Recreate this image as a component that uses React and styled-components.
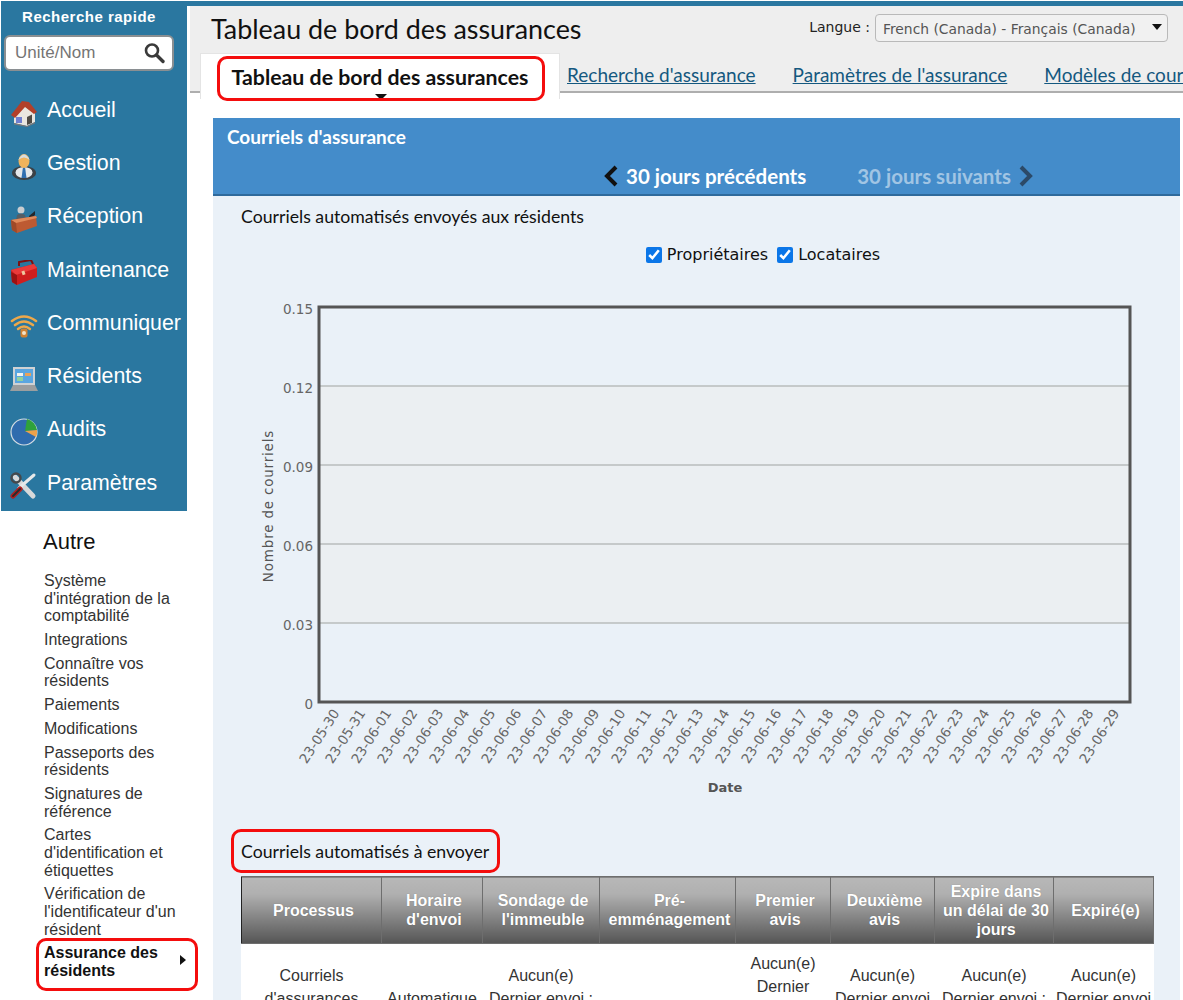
import styled, { createGlobalStyle } from "styled-components";

const GlobalStyle = createGlobalStyle`
  html, body { margin: 0; padding: 0; background: #fff; }
  #root { height: 1000px; overflow: hidden; }
`;

// --- sidebar icons, drawn by hand
const HouseIcon = () => (
  <svg width="28" height="28" viewBox="0 0 28 28">
    <path d="M4 15 L4 24 L17 27 L25 23 L25 14 L14 6 Z" fill="#e9e6e0" />
    <path d="M4 24 L17 27 L25 23 L25 24.5 L17 28 L4 25.5 Z" fill="#77777a" />
    <path d="M1 16 L12 2 L19 3 L27 13 L24 15 L15 8 L5 19 Z" fill="#b2402a" />
    <path d="M17 26 L17 18 L22 15.5 L22 24 Z" fill="#4e4a44" />
    <rect x="6" y="18" width="6" height="6" fill="#6f7fd0" />
  </svg>
);
const PersonIcon = () => (
  <svg width="26" height="28" viewBox="0 0 26 28">
    <ellipse cx="13" cy="21" rx="12" ry="7" fill="#3b4146" />
    <ellipse cx="13" cy="20.5" rx="8.5" ry="5.5" fill="#e4e7e9" />
    <path d="M12 15 L14 15 L15.5 26 L10.5 26 Z" fill="#2f6fb0" />
    <ellipse cx="13" cy="9" rx="5.5" ry="7" fill="#efb35c" />
    <path d="M7.2 8 Q13 -3 18.8 8 Q13 3 7.2 8" fill="#d8dcdc" />
  </svg>
);
const DeskIcon = () => (
  <svg width="28" height="28" viewBox="0 0 28 28">
    <circle cx="11" cy="5" r="3.5" fill="#c9cdd0" />
    <path d="M6 15 L7 10 Q11 7 15 10 L16 14 Z" fill="#555e66" />
    <path d="M19 11 L25 6 L25 10 L20 14 Z" fill="#23262a" />
    <path d="M1 15 L26 11 L27 21 L7 28 L2 25 Z" fill="#bd5a32" />
    <path d="M1 15 L26 11 L27 13 L6 18 Z" fill="#e08a5a" />
    <path d="M6 18 L7 28 L2 25 L1 15 Z" fill="#a04a28" />
  </svg>
);
const ToolboxIcon = () => (
  <svg width="28" height="26" viewBox="0 0 28 26">
    <path d="M9 6 L9 2 L21 0 L23 4" fill="none" stroke="#7c1010" strokeWidth="2" />
    <path d="M1 10 L24 4 L27 8 L27 17 L7 25 L2 22 Z" fill="#cf1e1e" />
    <path d="M1 10 L24 4 L27 8 L6 15 Z" fill="#ea3a3a" />
    <path d="M7 15 L7 25 L2 22 L1 12 Z" fill="#9c1212" />
    <rect x="12" y="11" width="3" height="4" fill="#eec9a0" transform="rotate(-18 13 13)" />
  </svg>
);
const WifiIcon = () => (
  <svg width="28" height="26" viewBox="0 0 28 26" fill="none" stroke="#eda84a" strokeLinecap="round">
    <path d="M2 8 Q14 -1 26 8" strokeWidth="2.6" />
    <path d="M5 12 Q14 5 23 12" strokeWidth="2.6" />
    <path d="M8 16 Q14 11 20 16" strokeWidth="2.4" />
    <rect x="10.5" y="15.5" width="7" height="9" rx="2" fill="#d08232" stroke="none" />
    <circle cx="14" cy="20" r="2" fill="#f3e3c8" stroke="none" />
  </svg>
);
const LaptopIcon = () => (
  <svg width="28" height="26" viewBox="0 0 28 26">
    <rect x="3" y="1" width="22" height="18" fill="#cfd2d4" />
    <rect x="5" y="3" width="18" height="14" fill="#5aa6e0" />
    <rect x="7" y="7" width="6" height="3" fill="#f3f3ee" />
    <rect x="15" y="7" width="6" height="3" fill="#e8a25a" />
    <rect x="7" y="11" width="6" height="4" fill="#8fd0a0" />
    <path d="M3 19 L25 19 L28 25 L0 25 Z" fill="#9b9e9f" />
  </svg>
);
const PieIcon = () => (
  <svg width="28" height="28" viewBox="0 0 28 28">
    <circle cx="14" cy="14" r="13" fill="#2f6cae" stroke="#d4dde3" strokeWidth="1.2" />
    <path d="M15 13 L17 1 A13 13 0 0 1 27 12 Z" fill="#2fa23b" />
    <path d="M15 13 L27 12 A13 13 0 0 1 26 19 Z" fill="#eda24a" />
  </svg>
);
const ToolsIcon = () => (
  <svg width="28" height="28" viewBox="0 0 28 28" strokeLinecap="round">
    <path d="M5 5 L23 24" stroke="#d7d9da" strokeWidth="5" />
    <path d="M24 3 L9 16" stroke="#e6e8e9" strokeWidth="3" />
    <path d="M10 17 L3 24" stroke="#b01f1f" strokeWidth="5" />
    <path d="M10 17 L3 24" stroke="#2b2b2b" strokeWidth="2" />
    <circle cx="6" cy="6" r="4.5" fill="none" stroke="#45494c" strokeWidth="2.4" />
  </svg>
);

const navItems = [
  { label: "Accueil", Icon: HouseIcon },
  { label: "Gestion", Icon: PersonIcon },
  { label: "Réception", Icon: DeskIcon },
  { label: "Maintenance", Icon: ToolboxIcon },
  { label: "Communiquer", Icon: WifiIcon },
  { label: "Résidents", Icon: LaptopIcon },
  { label: "Audits", Icon: PieIcon },
  { label: "Paramètres", Icon: ToolsIcon },
];

const otherLinks = [
  "Système d'intégration de la comptabilité",
  "Integrations",
  "Connaître vos résidents",
  "Paiements",
  "Modifications",
  "Passeports des résidents",
  "Signatures de référence",
  "Cartes d'identification et étiquettes",
  "Vérification de l'identificateur d'un résident",
];

const dates = [
  "23-05-30", "23-05-31", "23-06-01", "23-06-02", "23-06-03", "23-06-04", "23-06-05", "23-06-06",
  "23-06-07", "23-06-08", "23-06-09", "23-06-10", "23-06-11", "23-06-12", "23-06-13", "23-06-14",
  "23-06-15", "23-06-16", "23-06-17", "23-06-18", "23-06-19", "23-06-20", "23-06-21", "23-06-22",
  "23-06-23", "23-06-24", "23-06-25", "23-06-26", "23-06-27", "23-06-28", "23-06-29",
];

const yTicks = [
  { label: "0.15", y: 13 },
  { label: "0.12", y: 92 },
  { label: "0.09", y: 171 },
  { label: "0.06", y: 250 },
  { label: "0.03", y: 329 },
  { label: "0", y: 408 },
];

const Chart = () => (
  <ChartSvg viewBox="0 0 939 510" width="939" height="510">
    <rect x="106" y="92" width="811" height="237" fill="#ebeff2" />
    {yTicks.slice(1, 5).map((t) => (
      <line key={t.y} x1="106" x2="917" y1={t.y} y2={t.y} stroke="#b9bcbd" strokeWidth="1.5" />
    ))}
    <rect x="106" y="13" width="811" height="395" fill="none" stroke="#555" strokeWidth="3" />
    {yTicks.map((t) => (
      <AxisText key={t.label} x="100" y={t.y + 6.5} textAnchor="end">{t.label}</AxisText>
    ))}
    {dates.map((d, i) => (
      <AxisText
        key={d}
        x="0"
        y="0"
        textAnchor="end"
        transform={`translate(${127 + i * 26} 419) rotate(-57)`}
      >
        {d}
      </AxisText>
    ))}
    <AxisName x="0" y="0" textAnchor="middle" transform="translate(60 212) rotate(-90)">Nombre de courriels</AxisName>
    <AxisTitle x="512" y="498" textAnchor="middle">Date</AxisTitle>
  </ChartSvg>
);

const lastSent = "Dernier envoi : Jamais";

const tableHead = [
  { label: "Processus", width: 140 },
  { label: "Horaire d'envoi", width: 101 },
  { label: "Sondage de l'immeuble", width: 117 },
  { label: "Pré-emménagement", width: 136 },
  { label: "Premier avis", width: 95 },
  { label: "Deuxième avis", width: 104 },
  { label: "Expire dans un délai de 30 jours", width: 119 },
  { label: "Expiré(e)", width: 100 },
];

export default function App() {
  return (
    <>
      <GlobalStyle />
      <Page>
        <Side>
          <NavPanel>
            <SearchTitle>Recherche rapide</SearchTitle>
            <SearchBox>
              <SearchInput placeholder="Unité/Nom" />
              <svg width="24" height="24" viewBox="0 0 24 24" fill="none" stroke="#3a3a3a">
                <circle cx="10" cy="9.5" r="6" strokeWidth="2.6" />
                <path d="M14.5 14 L21 20.5" strokeWidth="3.4" strokeLinecap="round" />
              </svg>
            </SearchBox>
            <NavList>
              {navItems.map(({ label, Icon }) => (
                <NavItem key={label}>
                  <NavIcon><Icon /></NavIcon>
                  <NavLabel>{label}</NavLabel>
                </NavItem>
              ))}
            </NavList>
          </NavPanel>
          <OtherPanel>
            <OtherTitle>Autre</OtherTitle>
            {otherLinks.map((l) => (
              <OtherLink key={l}>{l}</OtherLink>
            ))}
            <OtherLink $active>
              Assurance des résidents
              <SideCaret />
              <RedBox $top={-6} $left={-8} $right={-20} $bottom={-11} />
            </OtherLink>
          </OtherPanel>
        </Side>

        <Main>
          <TopStripe />
          <Header>
            <TitleRow>
              <PageTitle>Tableau de bord des assurances</PageTitle>
              <LangGroup>
                <LangLabel>Langue :</LangLabel>
                <LangSelect>
                  French (Canada) - Français (Canada)
                  <SelectCaret />
                </LangSelect>
              </LangGroup>
            </TitleRow>
            <Tabs>
              <ActiveTab>
                Tableau de bord des assurances
                <TabCaret />
                <RedBox $top={2} $left={16} $right={14} $bottom={-2} />
              </ActiveTab>
              <TabLink>Recherche d'assurance</TabLink>
              <TabLink>Paramètres de l'assurance</TabLink>
              <TabLink>Modèles de courriel</TabLink>
            </Tabs>
          </Header>

          <Content>
            <Panel>
              <PanelHead>
                <PanelTitle>Courriels d'assurance</PanelTitle>
                <Pager>
                  <PagerLink>
                    <Chevron viewBox="0 0 16 24" width="16" height="24">
                      <path d="M13 3 L4 12 L13 21" stroke="#111" />
                    </Chevron>
                    30 jours précédents
                  </PagerLink>
                  <PagerLink $off>
                    30 jours suivants
                    <Chevron viewBox="0 0 16 24" width="16" height="24">
                      <path d="M3 3 L12 12 L3 21" stroke="#2c4a68" />
                    </Chevron>
                  </PagerLink>
                </Pager>
              </PanelHead>
              <PanelBody>
                <SectionTitle>Courriels automatisés envoyés aux résidents</SectionTitle>
                <Checks>
                  <CheckLabel><input type="checkbox" defaultChecked />Propriétaires</CheckLabel>
                  <CheckLabel><input type="checkbox" defaultChecked />Locataires</CheckLabel>
                </Checks>
                <Chart />
                <SectionTitle2>
                  Courriels automatisés à envoyer
                  <RedBox $top={-13} $left={-10} $right={-11} $bottom={-11} />
                </SectionTitle2>
                <Table>
                  <colgroup>
                    {tableHead.map((h) => (
                      <col key={h.label} style={{ width: h.width }} />
                    ))}
                  </colgroup>
                  <thead>
                    <tr>
                      {tableHead.map((h) => (
                        <Th key={h.label}>{h.label}</Th>
                      ))}
                    </tr>
                  </thead>
                  <tbody>
                    <tr>
                      <Td>Courriels d'assurances résidents</Td>
                      <Td>Automatique</Td>
                      <Td>Aucun(e)<br />{lastSent}</Td>
                      <Td />
                      <Td>Aucun(e)<br />{lastSent}</Td>
                      <Td>Aucun(e)<br />{lastSent}</Td>
                      <Td>Aucun(e)<br />{lastSent}</Td>
                      <Td>Aucun(e)<br />{lastSent}</Td>
                    </tr>
                  </tbody>
                </Table>
              </PanelBody>
            </Panel>
          </Content>
        </Main>
      </Page>
    </>
  );
}

const Page = styled.div`
  display: flex;
  width: 1183px;
  height: 1000px;
  overflow: hidden;
  font-family: "Liberation Sans", Arial, sans-serif;
`;

const Side = styled.aside`
  position: relative;
  z-index: 1;
  flex: 0 0 187px;
  box-sizing: border-box;
  padding: 1px 0 0 1px;
`;

const NavPanel = styled.div`
  height: 510px;
  box-sizing: border-box;
  background: #2a77a0;
  padding-top: 7px;
`;

const SearchTitle = styled.div`
  color: #fff;
  font-size: 15px;
  font-weight: bold;
  letter-spacing: 0.5px;
  text-align: center;
  line-height: 18px;
  margin-right: 10px;
  white-space: nowrap;
`;

const SearchBox = styled.div`
  display: flex;
  align-items: center;
  justify-content: space-between;
  box-sizing: border-box;
  width: 170px;
  height: 36px;
  margin: 9px 0 0 3px;
  padding: 0 6px 0 9px;
  background: #fff;
  border: 2px solid #8a8f92;
  border-radius: 6px;
`;

const SearchInput = styled.input`
  width: 110px;
  border: 0;
  outline: 0;
  padding: 0;
  background: transparent;
  font: 17px "Liberation Sans", Arial, sans-serif;
  &::placeholder { color: #757575; opacity: 1; }
`;

const NavList = styled.div`
  margin-top: 12px;
`;

const NavItem = styled.div`
  display: flex;
  align-items: center;
  height: 53.3px;
  padding-left: 9px;
`;

const NavIcon = styled.span`
  display: flex;
  justify-content: center;
  width: 28px;
  margin-top: 6px;
  margin-right: 9px;
`;

const NavLabel = styled.span`
  color: #fff;
  font-size: 21.33px;
  white-space: nowrap;
  margin-top: 1px;
`;

const OtherPanel = styled.div`
  padding: 18px 0 0 43px;
  width: 134px;
`;

const OtherTitle = styled.div`
  font-size: 22px;
  line-height: 26px;
  color: #111;
  margin: 0 0 17px -1px;
`;

const OtherLink = styled.div`
  position: relative;
  font-size: 16px;
  line-height: 17.6px;
  color: #333;
  margin-bottom: 6.2px;
  font-weight: ${(p) => (p.$active ? "bold" : "normal")};
  ${(p) => p.$active && "color: #111;"}
`;

const SideCaret = styled.span`
  position: absolute;
  right: -8px;
  top: 11px;
  border-left: 6px solid #111;
  border-top: 5px solid transparent;
  border-bottom: 5px solid transparent;
`;

const RedBox = styled.span`
  position: absolute;
  top: ${(p) => p.$top}px;
  left: ${(p) => p.$left}px;
  right: ${(p) => p.$right}px;
  bottom: ${(p) => p.$bottom}px;
  border: 3px solid #f40d0d;
  border-radius: 10px;
  pointer-events: none;
`;

const Main = styled.main`
  flex: 1;
  min-width: 0;
  overflow: hidden;
`;

const TopStripe = styled.div`
  height: 5px;
  margin-top: 1px;
  background: #2a77a0;
`;

const Header = styled.header`
  height: 85px;
  margin-left: 3px;
  background: #eeeeee;
  border-bottom: 2px solid #aeaeae;
  display: flex;
  flex-direction: column;
`;

const TitleRow = styled.div`
  display: flex;
  justify-content: space-between;
  padding: 5px 15px 0 21px;
  height: 41px;
  box-sizing: border-box;
`;

const PageTitle = styled.h1`
  margin: 0;
  font: 400 26.9px "Lato", sans-serif;
  line-height: 36px;
  color: #111;
  white-space: nowrap;
`;

const LangGroup = styled.div`
  display: flex;
  align-items: flex-start;
  gap: 5px;
  margin-top: 3px;
`;

const LangLabel = styled.span`
  font: 14px "DejaVu Sans", sans-serif;
  line-height: 18px;
  margin-top: 4px;
  color: #222;
`;

const LangSelect = styled.div`
  position: relative;
  box-sizing: border-box;
  width: 293px;
  height: 28px;
  padding: 6px 0 0 7px;
  font: 13.85px "DejaVu Sans", sans-serif;
  color: #555;
  background: #f1f1f1;
  border: 1px solid #b9b9b9;
  border-radius: 4px;
  white-space: nowrap;
`;

const SelectCaret = styled.span`
  position: absolute;
  right: 5px;
  top: 9px;
  border-top: 6px solid #111;
  border-left: 5px solid transparent;
  border-right: 5px solid transparent;
`;

const Tabs = styled.nav`
  display: flex;
  align-items: flex-start;
  gap: 37px;
  padding-left: 10px;
  white-space: nowrap;
  margin-top: 6px;
`;

const ActiveTab = styled.div`
  position: relative;
  flex: 0 0 360px;
  box-sizing: border-box;
  height: 46px;
  margin-right: -30px;
  padding-top: 10px;
  text-align: center;
  font: 700 21.3px "Lato", sans-serif;
  color: #111;
  background: #fff;
  border: 1px solid #e4e4e4;
  border-bottom: 0;
`;

const TabCaret = styled.span`
  position: absolute;
  left: 174px;
  top: 40px;
  border-top: 6px solid #111;
  border-left: 6px solid transparent;
  border-right: 6px solid transparent;
`;

const TabLink = styled.a`
  flex: 0 0 auto;
  font: 19px "Lato", sans-serif;
  color: #14587f;
  text-decoration: underline;
  margin-top: 10px;
`;

const Content = styled.div`
  padding: 25px 0 0 26px;
`;

const Panel = styled.section`
  width: 967px;
  background: #eaf1f8;
`;

const PanelHead = styled.div`
  box-sizing: border-box;
  height: 78px;
  padding: 8px 14px 0;
  background: #448cca;
  border-bottom: 2px solid #2f6a9c;
`;

const PanelTitle = styled.div`
  font: 700 19px "Lato", sans-serif;
  line-height: 22px;
  color: #fff;
`;

const Pager = styled.div`
  display: flex;
  justify-content: center;
  gap: 51px;
  margin-top: 15px;
  padding-left: 244px;
`;

const PagerLink = styled.div`
  display: flex;
  align-items: center;
  gap: 7px;
  font: 700 20.5px "Lato", sans-serif;
  line-height: 26px;
  color: ${(p) => (p.$off ? "rgba(255,255,255,0.5)" : "#fff")};
`;

const Chevron = styled.svg`
  fill: none;
  stroke-width: 4;
`;

const PanelBody = styled.div`
  padding: 11px 0 0 28px;
`;

const SectionTitle = styled.div`
  font: 400 17.7px "Lato", sans-serif;
  line-height: 20px;
  color: #111;
`;

const SectionTitle2 = styled(SectionTitle)`
  position: relative;
  display: inline-block;
  margin-top: 38px;
`;

const Checks = styled.div`
  display: flex;
  justify-content: center;
  gap: 9px;
  margin: 18px 0 0 0;
  padding-left: 82px;
  width: 880px;
`;

const CheckLabel = styled.label`
  display: flex;
  align-items: center;
  gap: 5px;
  font: 16px "DejaVu Sans", sans-serif;
  color: #111;
  input { margin: 0; width: 16px; height: 16px; accent-color: #0b76e8; }
`;

const ChartSvg = styled.svg`
  display: block;
  margin: 30px 0 0 -28px;
`;

const AxisText = styled.text`
  font: 13.5px "DejaVu Sans", sans-serif;
  fill: #666;
`;

const AxisName = styled.text`
  font: 13.5px "DejaVu Sans", sans-serif;
  letter-spacing: 0.8px;
  fill: #555;
`;

const AxisTitle = styled.text`
  font: bold 13px "DejaVu Sans", sans-serif;
  fill: #555;
`;

const Table = styled.table`
  display: table;
  table-layout: fixed;
  width: 912px;
  margin-top: 14px;
  border-collapse: collapse;
  background: #fff;
`;

const Th = styled.th`
  height: 67px;
  padding: 0 1px 0 5px;
  box-sizing: border-box;
  font: bold 16px/19px "Liberation Sans", Arial, sans-serif;
  color: #fff;
  text-shadow: 0 0 1px rgba(0,0,0,0.3);
  background: linear-gradient(#b8b8b8 0%, #b0b0b0 25%, #555 100%);
  border: 1px solid #6e6e6e;
  &:first-child { border-left-color: #222; }
`;

const Td = styled.td`
  padding: 7px 2px;
  font-size: 16px;
  line-height: 23.4px;
  text-align: center;
  vertical-align: middle;
  color: #333;
  height: 110px;
  box-sizing: border-box;
`;
